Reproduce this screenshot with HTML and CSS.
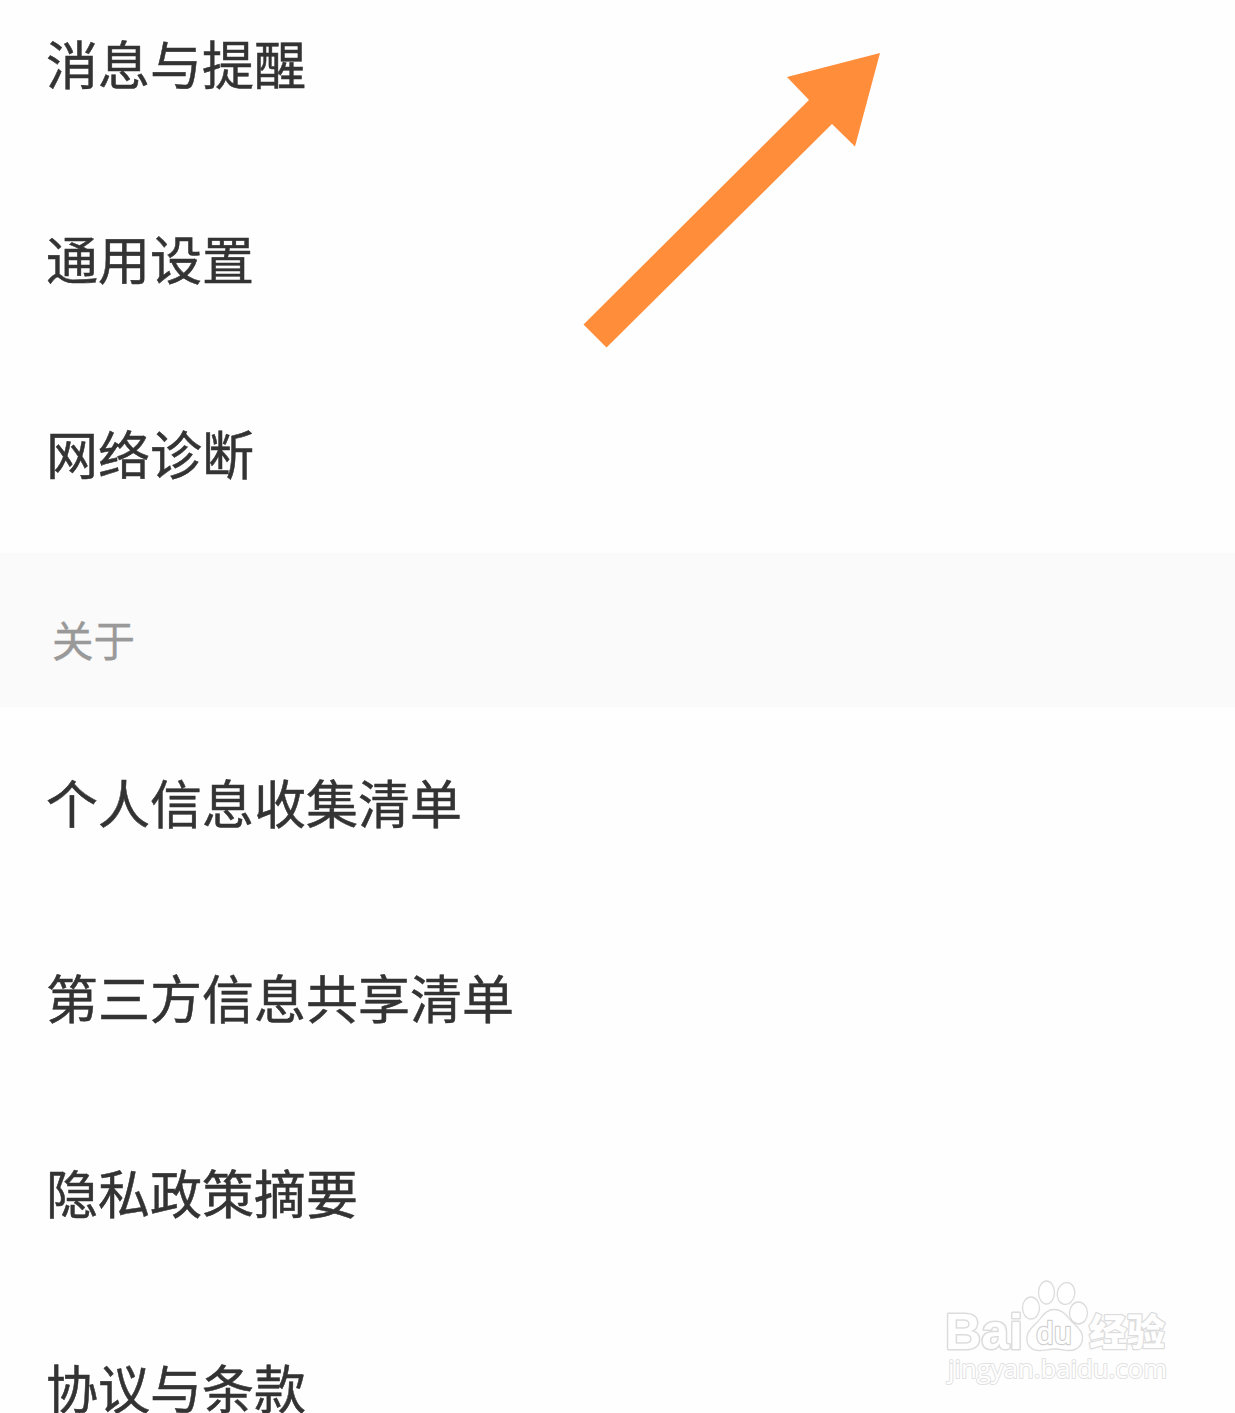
FILE: index.html
```html
<!DOCTYPE html>
<html lang="zh-CN">
<head>
    <meta charset="UTF-8">
    <meta name="viewport" content="width=device-width, initial-scale=1.0">
    <title>设置</title>
    <link rel="stylesheet" href="styles.css">
</head>
<body>
    <div class="page">
        <ul class="list list-top">
            <li>消息与提醒</li>
            <li>通用设置</li>
            <li>网络诊断</li>
        </ul>
        <h2 class="section-title">关于</h2>
        <ul class="list">
            <li>个人信息收集清单</li>
            <li>第三方信息共享清单</li>
            <li>隐私政策摘要</li>
            <li>协议与条款</li>
        </ul>

        <svg class="arrow" width="300" height="298" viewBox="0 0 300 298">
            <polygon points="300,2 275,95.500 252,73 26.500,296.500 3.500,273.500 229,49 207,26" />
        </svg>

        <svg class="watermark" width="245" height="125" viewBox="0 0 245 125">
            <text class="logo" x="10" y="79" textLength="78" lengthAdjust="spacingAndGlyphs">Bai</text>
            <ellipse cx="96" cy="38" rx="8.5" ry="11" />
            <ellipse cx="111.5" cy="22.5" rx="8" ry="11.5" />
            <ellipse cx="131" cy="23.5" rx="8.7" ry="11" transform="rotate(10 131 23.5)" />
            <ellipse cx="143.5" cy="43" rx="9" ry="11" />
            <path d="M119 39.500c-7 0-11 5-14 9.500-4 6-12 9-13 18-1 9 5 14 13 13.500 5 0 9-1.500 15-1.500s9 1.500 14 1.500c9 0 14-6 13.500-14-.5-8-8.500-11.500-13-17.500-3.500-5-8-9.500-15.500-9.500z" />
            <text class="du" x="101" y="74" textLength="36" lengthAdjust="spacingAndGlyphs">du</text>
            <text class="cn" x="154" y="76" textLength="76" lengthAdjust="spacingAndGlyphs">经验</text>
            <text class="url" x="13" y="108" textLength="219" lengthAdjust="spacingAndGlyphs">jingyan.baidu.com</text>
        </svg>
    </div>
</body>
</html>
```

FILE: styles.css
```css
body {
    margin: 0;
    background: #fefefe;
    font-family: "Noto Sans CJK SC", sans-serif;
    color: #333;
}
.page {
    position: relative;
    height: 1413px;
    overflow: hidden;
}
.list {
    list-style: none;
    margin: 0;
    padding: 0;
}
/* the first row is partly scrolled off */
.list-top {
    margin-top: -32px;
}
.list li {
    display: flex;
    align-items: center;
    box-sizing: border-box;
    height: 195px;
    padding: 0 0 5px 46px;
    font-size: 52px;
    line-height: 76px;
    -webkit-text-stroke: 0.5px #333;
}
.section-title {
    display: flex;
    align-items: center;
    box-sizing: border-box;
    height: 154px;
    margin: 0;
    padding: 17px 0 0 52px;
    background: #fafafa;
    color: #999;
    font-size: 41.5px;
    font-weight: normal;
    -webkit-text-stroke: 0.4px #999;
}
.arrow {
    position: absolute;
    left: 580px;
    top: 51px;
    fill: #ff8d3a;
}
.watermark {
    position: absolute;
    left: 935px;
    top: 1270px;
    fill: #fff;
    stroke: #dcdcdc;
    stroke-width: 1.3;
}
.watermark text {
    paint-order: stroke;
    stroke-width: 2.4;
    stroke-linejoin: round;
}
.watermark .logo {
    font: bold 50px "Liberation Sans", sans-serif;
    stroke-width: 3;
}
.watermark .du {
    font: 600 30px "Open Sans", sans-serif;
    stroke: #d0d0d0;
}
.watermark .cn {
    font: 900 37px "Noto Sans CJK SC", sans-serif;
}
.watermark .url {
    font: 26px "Open Sans", sans-serif;
    stroke: #e2e2e2;
    stroke-width: 2;
}
```
